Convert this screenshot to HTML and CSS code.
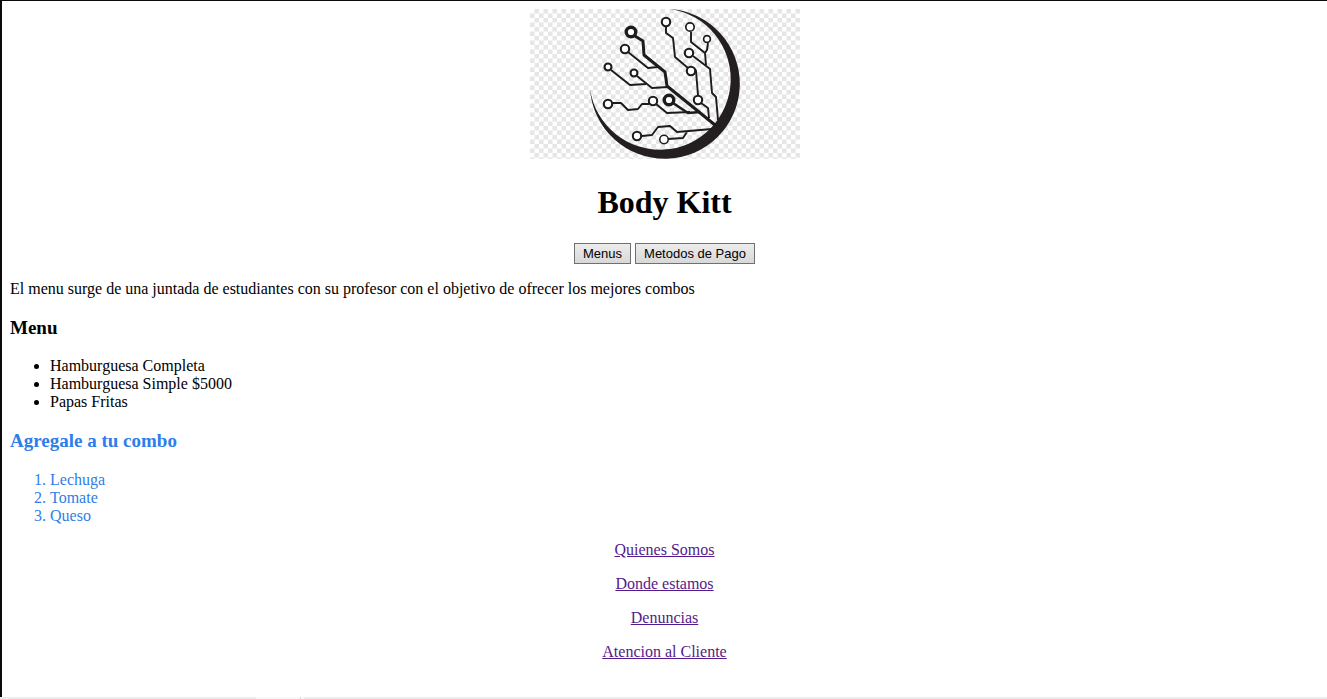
FILE: index.html
```html
<!DOCTYPE html>
<html lang="es">
<head>
<meta charset="utf-8">
<title>Body Kitt</title>
<link rel="stylesheet" href="styles.css">
</head>
<body>
<div class="page">
<header class="header">
  <svg class="logo" viewBox="530 9 270 150" role="img" aria-label="Body Kitt">
    <defs>
      <pattern id="checks" x="530" y="9" width="9" height="9" patternUnits="userSpaceOnUse">
        <rect width="9" height="9" fill="#fff"/>
        <path d="M4.5 0H9V4.5H4.5V9H0V4.5H4.5Z" fill="#e6e6e6"/>
      </pattern>
    </defs>
    <rect x="530" y="9" width="270" height="150" fill="url(#checks)"/>
    <path fill="#231f20" d="M670 9A75 75 0 1 1 590 89A70.7 70.7 0 1 0 670 9Z"/>
    <g fill="none" stroke="#1d1b1c" stroke-width="1.9" stroke-linejoin="round">
      <path stroke-width="3" d="M635 36L643 41L644 55L665 72L667 86L715 125"/>
      <path d="M628 52L648 68L658 67M611 70L630 85L646 84M637 76L652 88L668 87"/>
      <path d="M612 103L621 103L628 110L638 109L642 104L649 104M656 104L667 113L690 112"/>
      <path stroke-width="2.6" d="M673 103L688 113L700 112"/>
      <path d="M701 103L708 108L709 118M666 27V33L673 38L675 57L688 68M695 69L696 71L698 95"/>
      <path d="M691 32V42L705 53L706 65M708 43L707 50L705 53M693 56L710 69L712 93L716 97L718 120"/>
      <path d="M642 136L652 135L658 127L670 126L677 132L712 129M668 139L683 138L687 132"/>
      <g stroke-width="3.4" fill="#fff">
        <circle cx="631" cy="32" r="4.8"/>
        <circle cx="669" cy="100" r="4.8"/>
      </g>
      <g stroke-width="2.1" fill="#fff">
        <circle cx="625" cy="49" r="4.2"/>
        <circle cx="608" cy="67" r="3.5"/>
        <circle cx="634" cy="73" r="3.5"/>
        <circle cx="608" cy="104" r="4.2"/>
        <circle cx="653" cy="101" r="4.2"/>
        <circle cx="698" cy="100" r="4.2"/>
        <circle cx="666" cy="22" r="4.2"/>
        <circle cx="690" cy="27" r="4.2" stroke-width="1.7"/>
        <circle cx="707" cy="39" r="3.4" stroke-width="1.7"/>
        <circle cx="689" cy="53" r="4.2"/>
        <circle cx="691" cy="71" r="4.2"/>
        <circle cx="637" cy="136" r="4.2"/>
        <circle cx="664" cy="139.5" r="4.2" stroke-width="1.5"/>
      </g>
    </g>
  </svg>
  <h1>Body Kitt</h1>
  <nav>
    <button type="button">Menus</button>
    <button type="button">Metodos de Pago</button>
  </nav>
</header>
<main>
  <p>El menu surge de una juntada de estudiantes con su profesor con el objetivo de ofrecer los mejores combos</p>
  <h3>Menu</h3>
  <ul>
    <li>Hamburguesa Completa</li>
    <li>Hamburguesa Simple $5000</li>
    <li>Papas Fritas</li>
  </ul>
  <section class="extras">
    <h3>Agregale a tu combo</h3>
    <ol>
      <li>Lechuga</li>
      <li>Tomate</li>
      <li>Queso</li>
    </ol>
  </section>
</main>
<footer class="footer">
  <p><a href="#quienes">Quienes Somos</a></p>
  <p><a href="#donde">Donde estamos</a></p>
  <p><a href="#denuncias">Denuncias</a></p>
  <p><a href="#atencion">Atencion al Cliente</a></p>
</footer>
</div>
<div class="edge"></div>
</body>
</html>
```
FILE: styles.css
```css
* { box-sizing: border-box; }
body {
  margin: 0;
  min-height: 100vh;
  display: flex;
  flex-direction: column;
  background: #fff;
  color: #000;
  font: 16px/18px "Liberation Serif", "Times New Roman", serif;
}
.page {
  flex: 1;
  padding: 8px 8px 0;
  border-top: 1px solid #0d0a0d;
  border-left: 2px solid #0d0a0d;
}
.edge {
  height: 2px;
  background: linear-gradient(90deg, #ececec 256px, #f8f8f8 256px 300px, #d8d8d8 300px 301px, #f8f8f8 301px 304px, #ececec 304px);
}
.header, .footer { text-align: center; }
.logo { display: block; width: 270px; height: 150px; margin: 0 auto; }
h1 { margin: 24px 0 22px; font-size: 32px; line-height: 38px; }
nav { display: flex; justify-content: center; gap: 4px; }
button {
  height: 21px;
  padding: 0 8px;
  border: 1px solid #707070;
  border-radius: 0;
  background: linear-gradient(#ececec, #d8d8d8);
  color: #000;
  font: 13px/19px "Liberation Sans", Arial, sans-serif;
}
p { margin: 16px 0; }
h3 { margin: 20px 0 19px; font-size: 19px; line-height: 20px; }
ul, ol { margin: 0 0 20px; padding-left: 40px; }
.extras { color: #2f7de9; }
.extras h3 { margin-bottom: 20px; }
.extras ol { margin-bottom: 16px; }
a { color: #551a8b; }
```
